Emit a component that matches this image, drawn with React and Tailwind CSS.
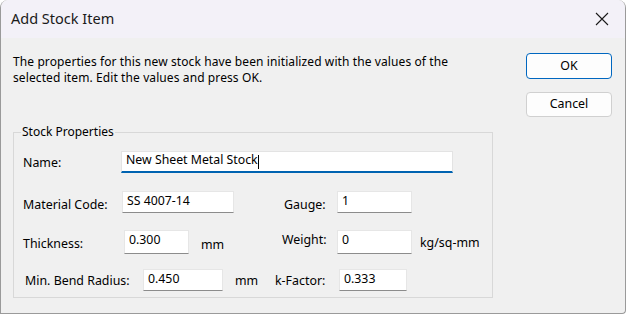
import React from "react";

const font = { fontFamily: '"Noto Sans", "Open Sans", sans-serif' };

function Field({ value, w, h = 22, active = false, caret = false }) {
  return (
    <div
      className={
        "flex items-center bg-white pl-[4px] text-[12.3px] leading-none text-black " +
        (active
          ? "border border-[#e3e3e3] border-b-2 border-b-[#0063b1]"
          : "border border-[#e6e6e6] border-b-[#8c8c8c]")
      }
      style={{ width: w, height: h }}
    >
      <span className="pb-[2px]">{value}</span>
      {caret && <span className="ml-[0px] h-[14px] w-px bg-black" />}
    </div>
  );
}

export default function App() {
  return (
    <div className="h-[315px] w-[627px] bg-white text-black" style={font}>
      <div className="flex h-[314px] w-[626px] flex-col overflow-hidden rounded-t-[8px] rounded-br-[4px] border-b border-l border-r border-[#9a9a9a] bg-[#f0f0f0]">
        {/* Title bar */}
        <div className="flex h-[38px] shrink-0 items-center justify-between bg-[#f3f1f8] pl-[10px] pr-[14px]">
          <span className="text-[14.5px] text-[#1a1a1a]">Add Stock Item</span>
          <svg width="14" height="14" viewBox="0 0 14 14" className="mr-[2px]">
            <path d="M1 1 L13 13 M13 1 L1 13" stroke="#1a1a1a" strokeWidth="1.1" fill="none" />
          </svg>
        </div>
        <div className="flex flex-1">
          {/* Left column */}
          <div className="flex flex-col pl-[12px]">
            <p className="mt-[16px] w-[470px] text-[12px] leading-[16px] tracking-[0.1px]">
              The properties for this new stock have been initialized with the values of the selected item. Edit the values and press OK.
            </p>
            <div className="relative mt-[46px] h-[166px] w-[480px] border border-[#d8d8d8] pl-[9px]">
              <div className="absolute left-[7px] top-[-9px] bg-[#f0f0f0] px-[1px] text-[12px] leading-[16px]">
                Stock Properties
              </div>
              {/* Row 1 */}
              <div className="mt-[18px] flex items-start text-[12.4px]">
                <span className="mt-[3px] w-[98px]">Name:</span>
                <Field value="New Sheet Metal Stock" w={332} active caret />
              </div>
              {/* Row 2 */}
              <div className="mt-[18px] flex items-start text-[12.4px]">
                <span className="mt-[5px] w-[99px]">Material Code:</span>
                <Field value="SS 4007-14" w={112} />
                <span className="ml-[50px] mt-[5px] w-[53px]">Gauge:</span>
                <Field value="1" w={75} />
              </div>
              {/* Row 3 */}
              <div className="mt-[15px] flex items-start text-[12.4px]">
                <span className="mt-[5px] w-[101px]">Thickness:</span>
                <Field value="0.300" w={65} h={24} />
                <span className="ml-[12px] mt-[6px] w-[81px]">mm</span>
                <span className="mt-[1px] w-[55px]">Weight:</span>
                <Field value="0" w={75} h={24} />
                <span className="ml-[8px] mt-[4px]">kg/sq-mm</span>
              </div>
              {/* Row 4 */}
              <div className="mt-[15px] flex items-start text-[12.4px]">
                <span className="ml-[2px] mt-[3px] w-[118px]">Min. Bend Radius:</span>
                <Field value="0.450" w={80} />
                <span className="ml-[12px] mt-[3px] w-[40px]">mm</span>
                <span className="mt-[3px] w-[64px]">k-Factor:</span>
                <Field value="0.333" w={68} />
              </div>
            </div>
          </div>
          {/* Right column */}
          <div className="ml-auto mr-[13px] mt-[15px] flex flex-col gap-[13px]">
            <button className="flex h-[26px] w-[86px] items-center justify-center rounded-[4px] border border-[#0067c0] bg-[#fdfdfd] text-[12.4px]">
              OK
            </button>
            <button className="flex h-[25px] w-[86px] items-center justify-center rounded-[4px] border border-[#d0d0d0] bg-[#fdfdfd] text-[12.4px]">
              Cancel
            </button>
          </div>
        </div>
      </div>
    </div>
  );
}
